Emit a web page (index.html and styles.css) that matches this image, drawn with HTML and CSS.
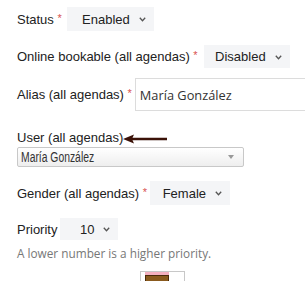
FILE: index.html
```html
<!DOCTYPE html>
<html lang="en">
<head>
    <meta charset="UTF-8">
    <meta name="viewport" content="width=device-width, initial-scale=1.0">
    <title>Resource</title>
    <link rel="stylesheet" href="styles.css">
</head>
<body>
    <main class="form">
        <div class="row row-status">
            <label>Status <span class="req">*</span></label>
            <div class="pick pick-status">Enabled
                <svg class="chev" width="7" height="5" viewBox="0 0 7 5"><path d="M0.8 0.8 L3.5 3.8 L6.2 0.8" fill="none" stroke="#555" stroke-width="1.3"/></svg>
            </div>
        </div>

        <div class="row row-online">
            <label>Online bookable (all agendas) <span class="req">*</span></label>
            <div class="pick pick-online">Disabled
                <svg class="chev" width="7" height="5" viewBox="0 0 7 5"><path d="M0.8 0.8 L3.5 3.8 L6.2 0.8" fill="none" stroke="#555" stroke-width="1.3"/></svg>
            </div>
        </div>

        <div class="row row-alias">
            <label>Alias (all agendas) <span class="req">*</span></label>
            <div class="text-input">María González</div>
        </div>

        <div class="user-block">
            <div class="user-label">
                <label>User (all agendas)</label>
                <svg class="arrow" width="46" height="10" viewBox="0 0 46 10">
                    <path d="M6 5 H44" stroke="#3b1208" stroke-width="2.4"/>
                    <path d="M0 5 L11 0.5 L9 5 L11 9.5 Z" fill="#3b1208"/>
                </svg>
            </div>
            <div class="combo">
                <span class="combo-text">María González</span>
                <span class="combo-arrow"></span>
            </div>
        </div>

        <div class="row row-gender">
            <label>Gender (all agendas) <span class="req">*</span></label>
            <div class="pick pick-gender">Female
                <svg class="chev" width="7" height="5" viewBox="0 0 7 5"><path d="M0.8 0.8 L3.5 3.8 L6.2 0.8" fill="none" stroke="#555" stroke-width="1.3"/></svg>
            </div>
        </div>

        <div class="row row-priority">
            <label>Priority</label>
            <div class="pick pick-priority">10
                <svg class="chev" width="7" height="5" viewBox="0 0 7 5"><path d="M0.8 0.8 L3.5 3.8 L6.2 0.8" fill="none" stroke="#555" stroke-width="1.3"/></svg>
            </div>
        </div>
        <p class="help">A lower number is a higher priority.</p>

        <div class="swatch"><div class="swatch-color"></div></div>
    </main>
</body>
</html>
```

FILE: styles.css
```css
body {
    margin: 0;
    padding: 0;
    background-color: #ffffff;
    font-family: "Liberation Sans", Arial, sans-serif;
    font-size: 13px;
    color: #222;
    overflow: hidden;
}
.form {
    padding-left: 17px;
}
.row {
    display: flex;
    align-items: center;
}
.req {
    color: #d9534f;
    font-size: 11px;
    vertical-align: top;
}
.pick {
    background-color: #f4f5f7;
    display: flex;
    align-items: center;
    justify-content: flex-end;
    color: #222;
    box-sizing: border-box;
    padding-right: 8px;
}
.chev {
    margin-left: 9px;
    margin-top: 1px;
}
.row-status {
    margin-top: 7px;
}
.pick-status {
    margin-left: 5px;
    width: 87px;
    height: 24px;
}
.row-online {
    margin-top: 14px;
}
.pick-online {
    margin-left: 6px;
    width: 86px;
    height: 23px;
}
.row-alias {
    margin-top: 10px;
}
.text-input {
    margin-left: 3px;
    flex: 1;
    height: 33px;
    border: 1px solid #dcdcdc;
    border-right: none;
    box-sizing: border-box;
    padding-left: 4px;
    display: flex;
    align-items: center;
    font-family: "Open Sans", sans-serif;
    font-size: 12.8px;
    color: #333;
}
.user-block {
    margin-top: 19px;
}
.user-label {
    display: flex;
    align-items: center;
}
.arrow {
    margin-top: 2px;
}
.combo {
    margin-top: 2px;
    width: 227px;
    height: 20px;
    box-sizing: border-box;
    border: 1px solid #c8c8c8;
    border-radius: 2px;
    background: linear-gradient(#ffffff, #eeeeee);
    display: flex;
    align-items: center;
    justify-content: space-between;
    padding: 0 9px 0 3px;
    color: #333;
}
.combo-text {
    display: inline-block;
    font-size: 14px;
    transform: scaleX(0.74);
    transform-origin: left center;
}
.combo-arrow {
    width: 0;
    height: 0;
    border-left: 3px solid transparent;
    border-right: 3px solid transparent;
    border-top: 4px solid #999;
}
.row-gender {
    margin-top: 14px;
}
.pick-gender {
    margin-left: 3px;
    width: 80px;
    height: 24px;
}
.row-priority {
    margin-top: 13px;
}
.pick-priority {
    margin-left: 3px;
    width: 58px;
    height: 22px;
}
.help {
    margin: 5px 0 0 0;
    font-family: "Open Sans", sans-serif;
    font-size: 11.8px;
    color: #777;
}
.swatch {
    margin: 10px 0 0 123px;
    width: 45px;
    height: 20px;
    border: 1px solid #c8c8c8;
    box-sizing: border-box;
    padding: 3px 0 0 4px;
}
.swatch-color {
    width: 22px;
    height: 14px;
    background-color: #8a5a1e;
    border: 1px solid #4a2a0a;
    box-shadow: 0 -3px 0 #f4b0c0;
}
```
